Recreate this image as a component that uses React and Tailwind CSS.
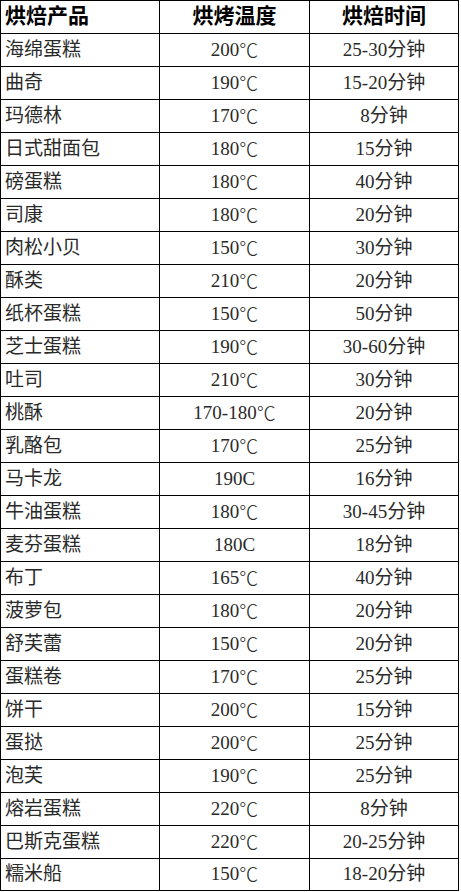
import React from "react";

const rows = [
  ["海绵蛋糕", "200℃", "25-30分钟"],
  ["曲奇", "190℃", "15-20分钟"],
  ["玛德林", "170℃", "8分钟"],
  ["日式甜面包", "180℃", "15分钟"],
  ["磅蛋糕", "180℃", "40分钟"],
  ["司康", "180℃", "20分钟"],
  ["肉松小贝", "150℃", "30分钟"],
  ["酥类", "210℃", "20分钟"],
  ["纸杯蛋糕", "150℃", "50分钟"],
  ["芝士蛋糕", "190℃", "30-60分钟"],
  ["吐司", "210℃", "30分钟"],
  ["桃酥", "170-180℃", "20分钟"],
  ["乳酪包", "170℃", "25分钟"],
  ["马卡龙", "190C", "16分钟"],
  ["牛油蛋糕", "180℃", "30-45分钟"],
  ["麦芬蛋糕", "180C", "18分钟"],
  ["布丁", "165℃", "40分钟"],
  ["菠萝包", "180℃", "20分钟"],
  ["舒芙蕾", "150℃", "20分钟"],
  ["蛋糕卷", "170℃", "25分钟"],
  ["饼干", "200℃", "15分钟"],
  ["蛋挞", "200℃", "25分钟"],
  ["泡芙", "190℃", "25分钟"],
  ["熔岩蛋糕", "220℃", "8分钟"],
  ["巴斯克蛋糕", "220℃", "20-25分钟"],
  ["糯米船", "150℃", "18-20分钟"],
];

const font = {
  fontFamily: '"Liberation Serif", "Noto Sans CJK SC", serif',
};

// ℃ from the CJK font so it gets the full-width glyph
function Temp({ value }) {
  if (!value.endsWith("℃")) return value;
  return (
    <>
      {value.slice(0, -1)}
      <span className="font-['Noto_Sans_CJK_SC',sans-serif] font-light">℃</span>
    </>
  );
}

export default function App() {
  return (
    <div className="w-[461px] h-[892px] bg-white" style={font}>
      <div className="w-[459px] border border-black">
        <div className="grid grid-cols-[159px_150px_1fr] h-[33px] border-b border-black text-[21px] font-bold text-black">
          <div className="border-r border-black flex items-center pl-[4px]">烘焙产品</div>
          <div className="border-r border-black flex items-center justify-center">烘烤温度</div>
          <div className="flex items-center justify-center">烘焙时间</div>
        </div>
        {rows.map((r, i) => (
          <div
            key={i}
            className={
              i === rows.length - 1
                ? "grid grid-cols-[159px_150px_1fr] h-[31px] text-[19px] text-[#2a2a2a]"
                : "grid grid-cols-[159px_150px_1fr] h-[33px] border-b border-black text-[19px] text-[#2a2a2a]"
            }
          >
            <div className="border-r border-black flex items-center pl-[4px]">{r[0]}</div>
            <div className="border-r border-black flex items-center justify-center">
              <Temp value={r[1]} />
            </div>
            <div className="flex items-center justify-center">{r[2]}</div>
          </div>
        ))}
      </div>
    </div>
  );
}
